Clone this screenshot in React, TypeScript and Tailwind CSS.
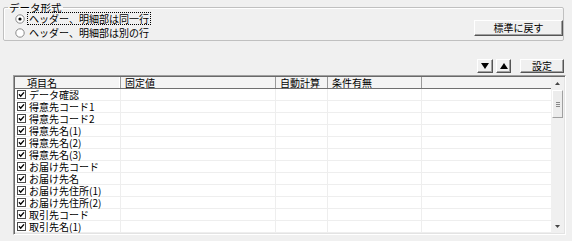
import React from 'react'

const items = [
	'データ確認',
	'得意先コード1',
	'得意先コード2',
	'得意先名(1)',
	'得意先名(2)',
	'得意先名(3)',
	'お届け先コード',
	'お届け先名',
	'お届け先住所(1)',
	'お届け先住所(2)',
	'取引先コード',
	'取引先名(1)',
]

const Radio = ({ checked }: { checked?: boolean }) => (
	<svg width="10" height="10" viewBox="0 0 10 10" className="shrink-0">
		<circle cx="5" cy="5" r="4.2" fill="#fff" stroke="#8a8a8a" strokeWidth="1" />
		{checked && <circle cx="5" cy="5" r="1.6" fill="#000" />}
	</svg>
)

const Check = () => (
	<svg width="9" height="9" viewBox="0 0 9 9" className="shrink-0">
		<rect x="0.5" y="0.5" width="8" height="8" fill="#fff" stroke="#4a4a4a" />
		<path d="M2 4.3 L3.7 6.2 L7 2.4" fill="none" stroke="#000" strokeWidth="1.4" />
	</svg>
)

const Btn = ({ className, children }: { className: string; children: React.ReactNode }) => (
	<button className={`flex items-center justify-center bg-[#f0f0f0] border border-t-white border-l-white border-r-[#555] border-b-[#555] shadow-[inset_-1px_-1px_0_#a0a0a0] ${className}`}>
		{children}
	</button>
)

const App: React.FC = () => {
	return (
		<div className="w-[572px] h-[241px] bg-[#f0f0f0] flex flex-col pt-[1px] text-black text-[10px] leading-[12px] font-['Noto_Sans_CJK_JP',sans-serif] overflow-hidden">
			{/* データ形式 */}
			<fieldset className="ml-[3px] w-[561px] h-[40px] border border-[#c0c0c0] rounded-[2px] shadow-[inset_1px_1px_0_#fff] flex flex-row">
				<legend className="ml-[4px] px-[1px] text-[10.5px] leading-[13px]">
					<span className="block">データ形式</span>
				</legend>
				<div className="flex flex-col gap-[1px] pl-[11px] -mt-[2px]">
					<div className="flex items-center h-[13px] gap-[2px]">
						<Radio checked />
						<span className="block border border-dotted border-black px-[1px] leading-[11px]">ヘッダー、明細部は同一行</span>
					</div>
					<div className="flex items-center h-[13px] gap-[4px]">
						<Radio />
						<span className="block">ヘッダー、明細部は別の行</span>
					</div>
				</div>
				<Btn className="ml-auto self-end mb-[3px] w-[89px] h-[16px] text-[10px]">標準に戻す</Btn>
			</fieldset>

			{/* ボタン */}
			<div className="flex justify-end items-center gap-[3px] pr-[8px] mt-[18px] h-[14px]">
				<Btn className="w-[16px] h-[14px]">
					<svg width="8" height="6" viewBox="0 0 8 6"><polygon points="0,0 8,0 4,6" fill="#000" /></svg>
				</Btn>
				<Btn className="w-[15px] h-[14px]">
					<svg width="8" height="6" viewBox="0 0 8 6"><polygon points="0,6 8,6 4,0" fill="#000" /></svg>
				</Btn>
				<Btn className="ml-[6px] w-[44px] h-[14px]">設定</Btn>
			</div>

			{/* 一覧 */}
			<div className="ml-[13px] mt-[2px] w-[553px] h-[160px] border border-t-[#a0a0a0] border-l-[#a0a0a0] border-r-white border-b-white shadow-[inset_1px_1px_0_#696969,inset_-1px_-1px_0_#e3e3e3] p-[1px] flex flex-row">
				<div className="flex-1 flex flex-col bg-white">
					<div className="flex h-[12px] bg-[#f4f4f4] border-b border-[#707070] shrink-0">
						<div className="w-[106px] pl-[12px] border-r border-[#9a9a9a] shadow-[inset_-1px_0_0_#fff]">項目名</div>
						<div className="w-[155px] pl-[4px] border-r border-[#9a9a9a]">固定値</div>
						<div className="w-[52px] pl-[4px] border-r border-[#9a9a9a]">自動計算</div>
						<div className="w-[94px] pl-[4px] border-r border-[#9a9a9a]">条件有無</div>
						<div className="flex-1" />
					</div>
					{items.map((name) => (
						<div key={name} className="flex h-[12px] border-b border-[#eeeeee]">
							<div className="w-[106px] flex items-center gap-[3px] pl-[2px] border-r border-[#eeeeee] whitespace-nowrap">
								<Check />
								<span className="block">{name}</span>
							</div>
							<div className="w-[155px] border-r border-[#eeeeee]" />
							<div className="w-[52px] border-r border-[#eeeeee]" />
							<div className="w-[94px] border-r border-[#eeeeee]" />
							<div className="flex-1" />
						</div>
					))}
				</div>
				{/* スクロールバー */}
				<div className="w-[13px] bg-[#f0f0f0] flex flex-col items-center">
					<div className="h-[13px] flex items-center justify-center">
						<svg width="5" height="3" viewBox="0 0 5 3"><polygon points="0,3 5,3 2.5,0" fill="#444" /></svg>
					</div>
					<div className="w-[11px] h-[28px] bg-[#ececec] border border-t-white border-l-white border-r-[#a0a0a0] border-b-[#a0a0a0] flex flex-col items-center justify-center gap-[1px]">
						<div className="w-[4px] h-[1px] bg-[#888]" />
						<div className="w-[4px] h-[1px] bg-[#888]" />
						<div className="w-[4px] h-[1px] bg-[#888]" />
					</div>
					<div className="flex-1" />
					<div className="h-[13px] flex items-center justify-center">
						<svg width="5" height="3" viewBox="0 0 5 3"><polygon points="0,0 5,0 2.5,3" fill="#444" /></svg>
					</div>
				</div>
			</div>
		</div>
	)
}

export default App
